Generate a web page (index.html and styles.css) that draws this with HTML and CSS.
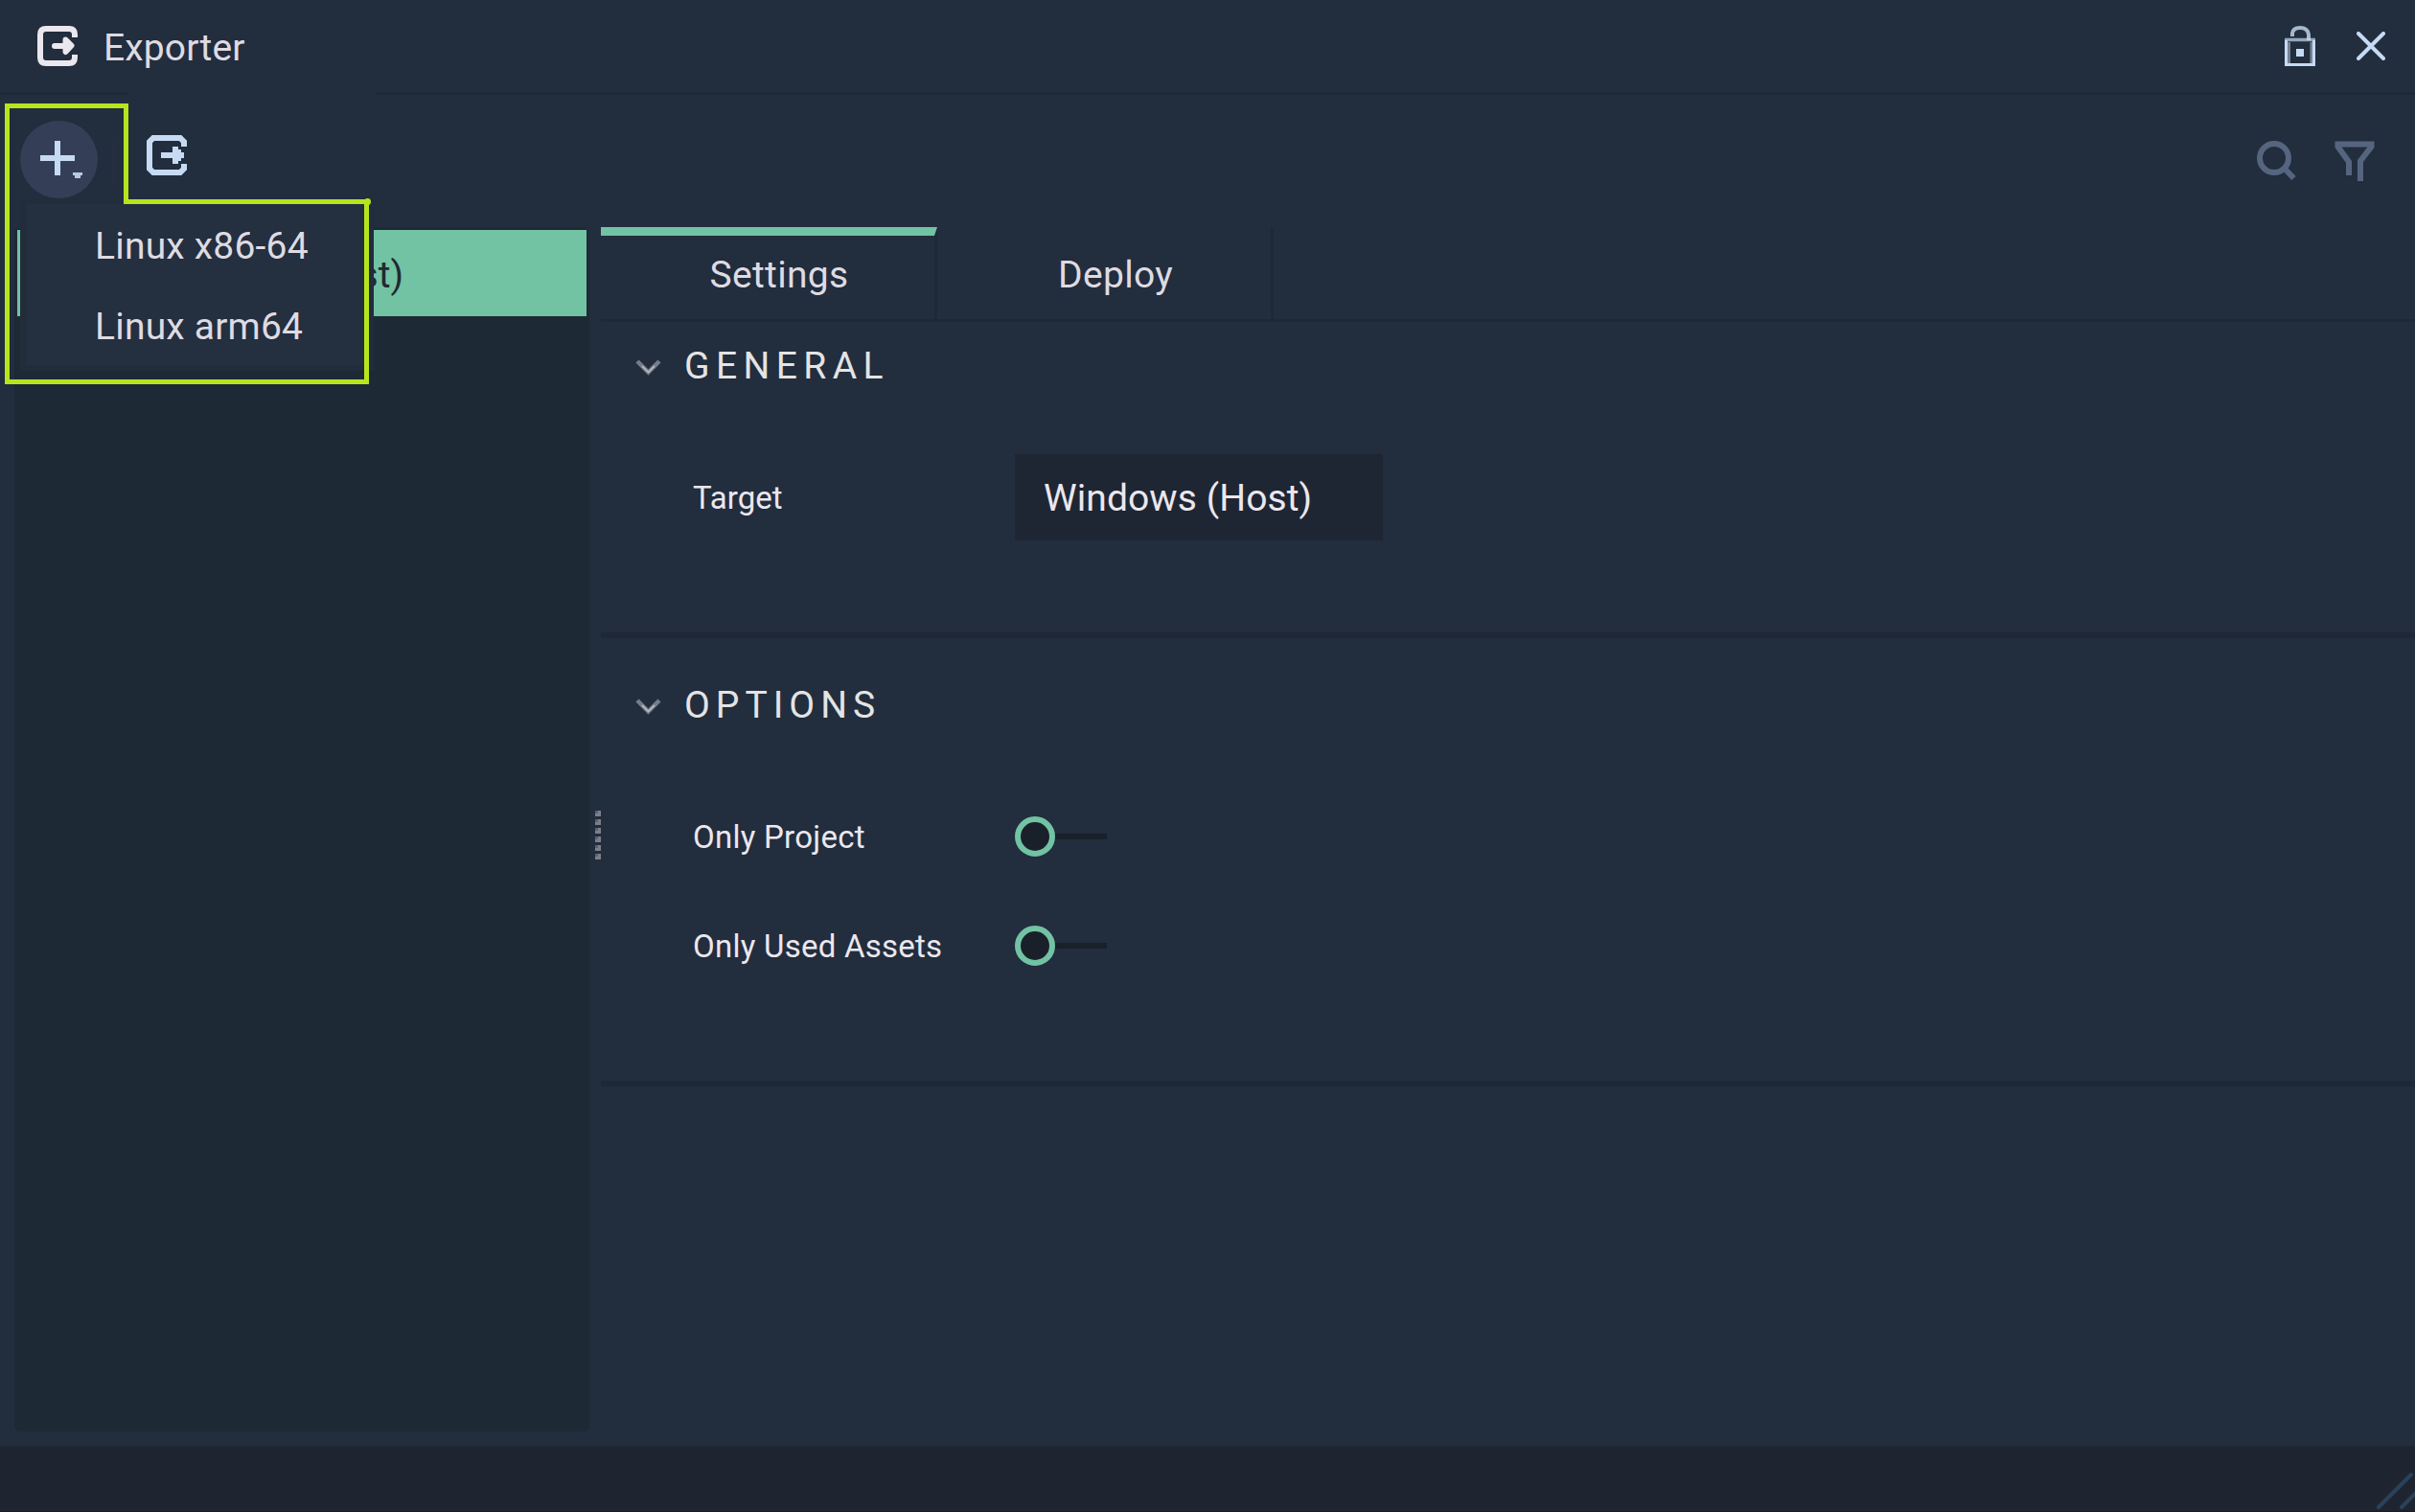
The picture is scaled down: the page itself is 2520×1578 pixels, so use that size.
FILE: index.html
```html
<!DOCTYPE html>
<html lang="en">
<head>
<meta charset="utf-8">
<title>Exporter</title>
<link rel="stylesheet" href="styles.css">
</head>
<body>
<svg class="defs" width="0" height="0" aria-hidden="true">
  <symbol id="export" viewBox="0 0 42 42">
    <path d="M39 12V9Q39 3 33 3H9Q3 3 3 9V33Q3 39 9 39H33Q39 39 39 33V30" fill="none" stroke="currentColor" stroke-width="6"/>
    <path d="M18 21H32M29.500 14.500L35.500 20.500L29.500 27Z" fill="currentColor" stroke="currentColor" stroke-width="6" stroke-linecap="round" stroke-linejoin="round"/>
  </symbol>
  <symbol id="export-bar" viewBox="0 0 42 42">
    <path d="M39 12V7L35 3H7L3 7V35L7 39H35L39 35V30" fill="none" stroke="currentColor" stroke-width="6"/>
    <path d="M15 18H27V12H33V15H36V18H39V24H36V27H33V30H27V24H15Z" fill="currentColor"/>
  </symbol>
  <symbol id="chevron" viewBox="0 0 27 18">
    <path d="M2 2L13.500 13.500L25 2" fill="none" stroke="currentColor" stroke-width="4.500"/>
    <path d="M7 7L13.500 13.500L20 7" fill="none" stroke="#c2c4ca" stroke-width="1.500"/>
  </symbol>
</svg>
<div class="window">
  <header class="titlebar">
    <svg class="icon title-icon"><use href="#export"/></svg>
    <h1 class="title">Exporter</h1>
    <svg class="lock" viewBox="0 0 32 42" fill="none" stroke="currentColor">
      <path d="M1.500 15V40.500H30.500V15" stroke-width="3"/>
      <path d="M4.500 17V39M28 17V39" stroke-width="3" opacity=".5"/>
      <path d="M0 14.500H32" stroke-width="3.500" opacity=".7"/>
      <path d="M8 11V7.500Q9 2 16 2Q24 2 25 9V15" stroke-width="4" opacity=".8"/>
      <path d="M12 28H20" stroke-width="8"/>
    </svg>
    <svg class="close" viewBox="0 0 30 30"><path d="M2 2L28 28M28 2L2 28" fill="none" stroke="currentColor" stroke-width="4" stroke-linecap="round"/></svg>
  </header>
  <nav class="toolbar">
    <button class="add" aria-label="Add">
      <svg viewBox="0 0 81 81"><path d="M21 39H57M39 21V57" stroke="#c6dbf3" stroke-width="6"/><path d="M55 54H65V57H63V60H57V57H55Z" fill="#b7cae3"/></svg>
    </button>
    <i class="separator"></i>
    <svg class="icon bar-icon"><use href="#export-bar"/></svg>
    <svg class="search" viewBox="0 0 42 42" fill="none" stroke="currentColor"><circle cx="18" cy="18" r="15" stroke-width="6"/><path d="M29 29L38.500 39" stroke-width="6"/></svg>
    <svg class="filter" viewBox="0 0 42 42" fill="none" stroke="currentColor" stroke-width="6"><path d="M15 36V22L3.500 6V3.500H38.500V6L27 21V42"/></svg>
  </nav>
  <main class="body">
    <aside class="targets"><div class="target-row"><span>st)</span></div></aside>
    <div class="grip"><i></i><i></i><i></i><i></i><i></i><i></i></div>
    <section class="details">
      <div class="tabs"><div class="tab active"><span>Settings</span></div><div class="tab"><span>Deploy</span></div></div>
      <section class="group general">
        <h2><svg class="chevron"><use href="#chevron"/></svg><span>GENERAL</span></h2>
        <div class="field"><label>Target</label><div class="combo"><span>Windows (Host)</span></div></div>
      </section>
      <section class="group options">
        <h2><svg class="chevron"><use href="#chevron"/></svg><span>OPTIONS</span></h2>
        <div class="field"><label class="spaced">Only Project</label><div class="toggle"><i></i></div></div>
        <div class="field"><label class="spaced">Only Used Assets</label><div class="toggle"><i></i></div></div>
      </section>
    </section>
  </main>
  <footer class="status">
    <svg class="resize" viewBox="0 0 42 42"><path d="M4 38L38 4M28 38L42 24" stroke="#29425c" stroke-width="4" stroke-linecap="round"/></svg>
  </footer>
  <div class="menu"><div class="menu-list"><div class="item">Linux x86-64</div><div class="item">Linux arm64</div></div></div>
  <svg class="highlight" viewBox="0 0 390 405"><path d="M7.500 110.500H131.500V210.500H382.500V398.500H7.500Z" fill="none" stroke="#b5e61d" stroke-width="5"/><circle cx="383.500" cy="210.500" r="3.500" fill="#b5e61d"/></svg>
</div>
</body>
</html>
```
FILE: styles.css
```css
* { box-sizing: border-box; }
body { margin: 0; background: #222d3d; color: #dedbe2; font: 39px/48px Roboto, sans-serif; }
svg { display: block; flex: none; }
.defs { position: absolute; }
.window { position: relative; width: 2520px; height: 1578px; display: flex; flex-direction: column; overflow: hidden; }
.icon { width: 42px; height: 42px; }

.titlebar { height: 99px; display: flex; align-items: flex-start; padding: 27px 31px 0 39px; background: linear-gradient(90deg, #1e2937 133px, transparent 133px, transparent 392px, #1e2937 392px) 0 100% / 100% 3px no-repeat; color: #c6dbf3; }
.title-icon { color: #ebe7ee; }
.title { margin: -1px auto 0 27px; font-size: 39px; font-weight: 400; letter-spacing: .15px; color: #dedbe2; }
.lock { width: 32px; height: 42px; }
.close { width: 30px; height: 30px; margin: 6px 0 0 43px; }

.toolbar { height: 138px; display: flex; align-items: flex-start; padding: 27px 42px 0 21px; color: #56657f; }
.add { width: 81px; height: 81px; padding: 0; border: 0; border-radius: 50%; background: #343f57; }
.separator { width: 6px; height: 48px; margin: 18px 30px 0 15px; background: #242e3e; }
.bar-icon { margin: 15px auto 0 0; color: #c6dbf3; }
.search { width: 42px; height: 42px; margin-top: 21px; }
.filter { width: 42px; height: 42px; margin: 21px 0 0 39px; }

.body { height: 1272px; display: flex; padding-left: 15px; }
.targets { width: 600px; height: 1257px; padding: 3px; border-radius: 6px; background: #1e2936; }
.target-row { height: 90px; padding: 23px 191px 0 0; text-align: right; background: #72c2a4; color: #222930; }
.grip { width: 6px; margin: 609px 0 0 6px; display: flex; flex-direction: column; gap: 3px; }
.grip i { height: 6px; background: linear-gradient(#5c626f, #5c626f) 0 0 / 3px 3px no-repeat #7b808a; }
.details { flex: 1; }

.tabs { height: 99px; display: flex; border-bottom: 3px solid #1e2937; }
.tab { position: relative; width: 351px; padding: 26px 0 0 24px; text-align: center; letter-spacing: .3px; border-right: 3px solid #1e2937; }
.active::before { content: ""; position: absolute; left: 0; top: 0; width: 351px; height: 9px; background: #72c2a4; clip-path: polygon(0 0, 100% 0, 348px 100%, 0 100%); }
.group { border-bottom: 6px solid #1e2736; }
.general { height: 330px; padding-top: 22px; }
.options { height: 468px; padding-top: 46px; }
h2 { display: flex; height: 48px; margin: 0; padding-left: 36px; font-size: 39px; font-weight: 400; color: #e3e4e4; letter-spacing: 6.400px; }
.options h2 { letter-spacing: 6px; }
h2 span { margin-left: 24px; }
.chevron { width: 27px; height: 18px; margin-top: 17px; color: #767d89; }
.field { height: 114px; margin-left: 96px; display: flex; align-items: center; color: #ebe7ee; }
h2 + .field { margin-top: 56px; }
label { width: 336px; padding-top: 2px; font-size: 33px; }
.spaced { letter-spacing: .25px; }
.combo { width: 384px; height: 90px; padding: 22px 0 0 30px; background: #1e2634; letter-spacing: .1px; }
.toggle { width: 96px; height: 42px; display: flex; align-items: center; background: linear-gradient(#1a2029, #1a2029) 100% 18px / 57px 6px no-repeat; }
.toggle i { width: 42px; height: 42px; border: 6px solid #72c2a4; border-radius: 50%; background: #1a2029; }

.status { height: 69px; display: flex; justify-content: flex-end; align-items: flex-end; background: #1f2530; border-bottom: 1px solid #1a1b25; }
.resize { width: 42px; height: 42px; }

.menu { position: absolute; left: 21px; top: 198px; width: 369px; height: 189px; padding: 15px 10px 6px 6px; background: #222d3c; clip-path: polygon(0 10px, 100% 10px, 100% 100%, 0 100%); }
.menu-list { height: 168px; background: #242f3f; }
.item { height: 84px; padding: 20px 0 0 72px; letter-spacing: .2px; }
.highlight { position: absolute; left: 0; top: 0; width: 390px; height: 405px; }
```
